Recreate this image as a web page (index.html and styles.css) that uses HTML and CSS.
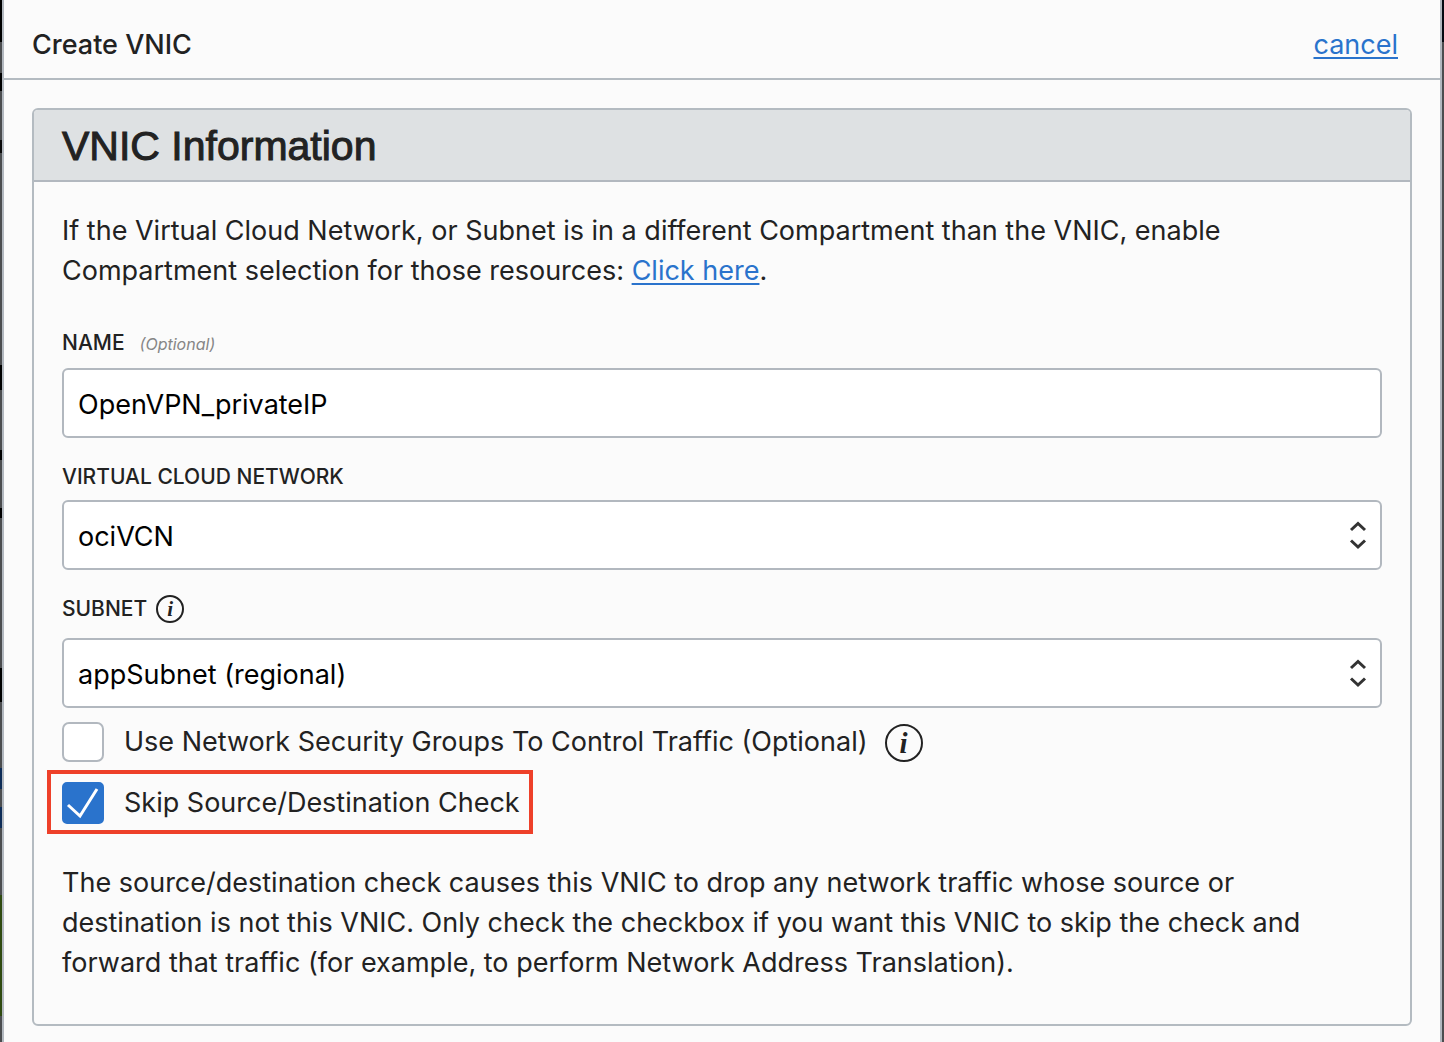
FILE: index.html
```html
<!DOCTYPE html>
<html lang="en">
<head>
<meta charset="utf-8">
<meta name="viewport" content="width=device-width, initial-scale=1">
<title>Create VNIC</title>
<link rel="stylesheet" href="styles.css">
</head>
<body>
<main class="sheet">
  <header class="sheet-header">
    <h1 class="sheet-title">Create VNIC</h1>
    <a class="link" href="#">cancel</a>
  </header>
  <form class="sheet-body">
    <section class="panel">
      <h2 class="panel-title">VNIC Information</h2>
      <div class="panel-body">
        <p class="text">If the Virtual Cloud Network, or Subnet is in a different Compartment than the VNIC, enable<br>Compartment selection for those resources: <a class="link" href="#">Click here</a>.</p>

        <div class="field field-first">
          <div class="label-row">
            <label class="label" for="name">NAME</label>
            <span class="hint">(Optional)</span>
          </div>
          <input class="control" id="name" type="text" value="OpenVPN_privateIP">
        </div>

        <div class="field">
          <div class="label-row">
            <label class="label" for="vcn">VIRTUAL CLOUD NETWORK</label>
          </div>
          <div class="select">
            <select class="control" id="vcn"><option>ociVCN</option></select>
            <svg class="arrows" viewBox="0 0 18 30" aria-hidden="true"><path d="M2 10 9 3.500l7 6.500M2 20.500l7 6.500 7-6.500"/></svg>
          </div>
        </div>

        <div class="field">
          <div class="label-row label-row-tall">
            <label class="label" for="subnet">SUBNET</label>
            <button class="info" type="button" aria-label="About subnet">i</button>
          </div>
          <div class="select">
            <select class="control" id="subnet"><option>appSubnet (regional)</option></select>
            <svg class="arrows" viewBox="0 0 18 30" aria-hidden="true"><path d="M2 10 9 3.500l7 6.500M2 20.500l7 6.500 7-6.500"/></svg>
          </div>
        </div>

        <div class="checks">
          <div class="check-row">
            <input class="box" type="checkbox" id="nsg">
            <label class="check-label" for="nsg">Use Network Security Groups To Control Traffic (Optional)</label>
            <button class="info info-large" type="button" aria-label="About network security groups">i</button>
          </div>
          <div class="check-row highlight">
            <span class="tick-wrap">
              <input class="box" type="checkbox" id="skip" checked>
              <svg class="tick" viewBox="0 0 42 42" aria-hidden="true"><path d="M6 23 18 34 35 7"/></svg>
            </span>
            <label class="check-label" for="skip">Skip Source/Destination Check</label>
          </div>
        </div>

        <p class="text">The source/destination check causes this VNIC to drop any network traffic whose source or<br>destination is not this VNIC. Only check the checkbox if you want this VNIC to skip the check and<br>forward that traffic (for example, to perform Network Address Translation).</p>
      </div>
    </section>
  </form>
</main>
</body>
</html>
```
FILE: styles.css
```css
* {
  box-sizing: border-box;
}

body {
  margin: 0;
  padding: 0 2px;
  color: #222;
  font-family: Inter, "Liberation Sans", sans-serif;
  font-size: 27px;
  line-height: 40px;
  /* the dimmed console that shows at both sides of the sheet */
  background:
    linear-gradient(#000 42px, #4b4d4f 42px 73px, #000 73px 91px, #4b4d4f 91px 140px, #0a0a0a 140px 153px, #4b4d4f 153px 365px, #000 365px 390px, #4b4d4f 390px 450px, #000 450px 460px, #4b4d4f 460px 508px, #000 508px 518px, #4b4d4f 518px 668px, #000 668px 702px, #4b4d4f 702px 768px, #0d2c57 768px 789px, #4b4d4f 789px 807px, #0d2c57 807px 828px, #4b4d4f 828px 895px, #2f4a10 895px 1016px, #4b4d4f 1016px) left / 2px 100% no-repeat,
    linear-gradient(#050a12 42px, #4b4d4f 42px) #4b4d4f;
}

.sheet {
  min-height: 100vh;
  border: solid #b2b8bf;
  border-width: 0 2px;
  background: #fbfbfb;
}

.sheet-header {
  display: flex;
  align-items: center;
  justify-content: space-between;
  padding: 25px 42px 13px 28px;
  border-bottom: 2px solid #b4bbc1;
}

.sheet-title {
  margin: 0;
  font-size: 27px;
  font-weight: 500;
}

.link {
  color: #2a73cc;
  text-decoration-thickness: 2px;
  text-underline-offset: 3px;
}

.sheet-body {
  padding: 28px 28px 16px;
}

.panel {
  overflow: hidden;
  border: 2px solid #b4bbc1;
  border-radius: 6px;
}

.panel-title {
  margin: 0;
  padding: 12px 28px 10px;
  border-bottom: 2px solid #b2b8bf;
  background: #dee1e3;
  font-family: "Liberation Sans", sans-serif;
  font-size: 41px;
  font-weight: 400;
  line-height: 48px;
  -webkit-text-stroke: 1px #222;
}

.panel-body {
  padding: 29px 28px 41px;
}

.text {
  margin: 0;
}

.field {
  margin-top: 25px;
}

.field-first {
  margin-top: 38px;
}

.label-row {
  display: flex;
  align-items: center;
  height: 28px;
  margin-bottom: 9px;
}

.field-first .label-row {
  margin-bottom: 11px;
}

.label-row-tall {
  margin-bottom: 15px;
}

.label {
  font-size: 21px;
  font-weight: 500;
}

.hint {
  margin-left: 15px;
  padding-top: 2px;
  color: #868686;
  font-size: 16px;
  font-style: italic;
}

.control {
  display: block;
  width: 100%;
  height: 70px;
  padding: 2px 14px 0;
  border: 2px solid #b2b8bf;
  border-radius: 6px;
  background: #fff;
  color: #000;
  font: inherit;
  appearance: none;
}

.select {
  position: relative;
}

.select .control {
  padding-top: 4px;
}

.arrows {
  position: absolute;
  top: 20px;
  right: 15px;
  width: 18px;
  height: 30px;
  fill: none;
  stroke: #333;
  stroke-width: 3;
  pointer-events: none;
}

.info {
  flex: none;
  width: 28px;
  height: 28px;
  margin-left: 9px;
  padding: 0;
  border: 2px solid #222;
  border-radius: 50%;
  background: none;
  color: #222;
  font: italic bold 21px/22px "Liberation Serif", serif;
}

.info-large {
  width: 38px;
  height: 38px;
  margin: 2px 0 0 17px;
  font-size: 29px;
  line-height: 32px;
}

.checks {
  display: flex;
  flex-direction: column;
  align-items: flex-start;
  gap: 20px;
  margin: 14px 0 39px;
}

.check-row {
  position: relative;
  display: flex;
  align-items: center;
  height: 40px;
}

.highlight {
  height: 42px;
}

.highlight::after {
  content: "";
  position: absolute;
  inset: -12px -13px -10px -15px;
  border: 4px solid #ee4029;
  pointer-events: none;
}

.box {
  display: block;
  flex: none;
  width: 42px;
  height: 40px;
  margin: 0;
  border: 2px solid #b2b8bf;
  border-radius: 7px;
  background: #fff;
  appearance: none;
}

.box:checked {
  height: 42px;
  border-color: #2a73cc;
  border-radius: 5px;
  background: #2a73cc;
}

.tick-wrap {
  position: relative;
}

.tick {
  position: absolute;
  inset: 0;
  fill: none;
  stroke: #fff;
  stroke-width: 3;
  pointer-events: none;
}

.check-label {
  margin-left: 20px;
  white-space: nowrap;
}
```
